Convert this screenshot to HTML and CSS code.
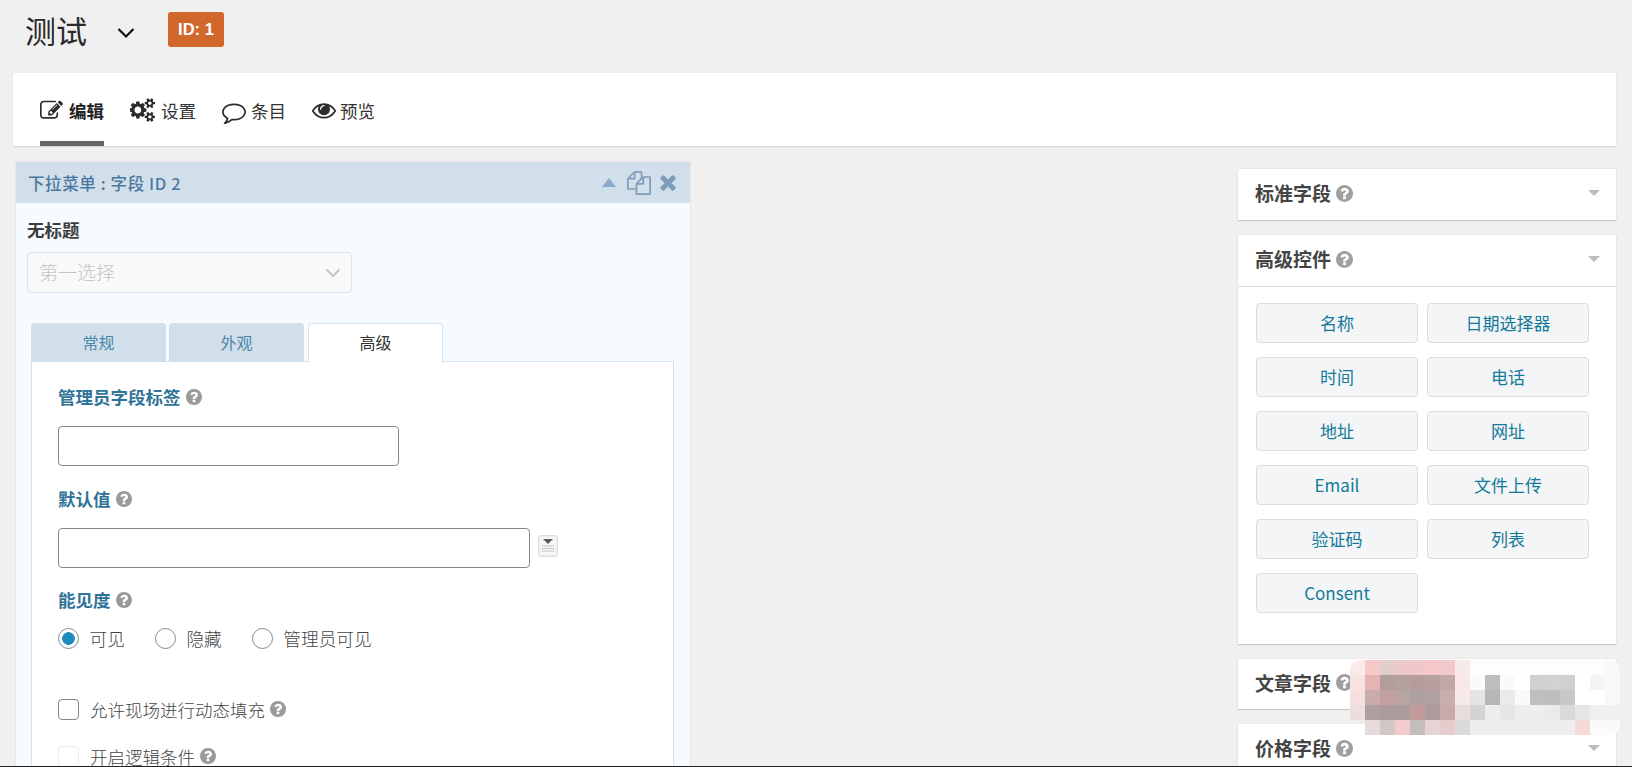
FILE: index.html
```html
<!DOCTYPE html>
<html lang="zh-CN">
<head>
<meta charset="utf-8">
<title>测试</title>
<link rel="stylesheet" href="styles.css">
</head>
<body>
<svg class="defs" width="0" height="0" aria-hidden="true">
  <symbol id="q" viewBox="128 128 1536 1536"><path d="M1024 1376v-192q0-14-9-23t-23-9h-192q-14 0-23 9t-9 23v192q0 14 9 23t23 9h192q14 0 23-9t9-23zm256-672q0-88-55.5-163t-138.5-116-170-41q-243 0-371 213-15 24 8 42l132 100q7 6 19 6 16 0 25-12 53-68 86-92 34-24 86-24 48 0 85.5 26t37.5 59q0 38-20 61t-68 45q-63 28-115.5 86.5t-52.5 125.5v36q0 14 9 23t23 9h192q14 0 23-9t9-23q0-19 21.5-49.5t54.5-49.5q32-18 49-28.5t46-35 44.5-48 28-60.5 12.5-81zm384 192q0 209-103 385.5t-279.5 279.5-385.5 103-385.5-103-279.5-279.5-103-385.5 103-385.5 279.5-279.5 385.5-103 385.5 103 279.5 279.5 103 385.5z"/></symbol>
</svg>

<header class="title-bar">
  <h1 class="form-title">测试</h1>
  <svg class="chevron" viewBox="0 0 18 12"><path d="M1.5 2 9 9.5 16.5 2" fill="none" stroke="#111" stroke-width="2.2"/></svg>
  <span class="id-badge">ID: 1</span>
</header>

<nav class="toolbar">
  <a class="tool active">
    <svg class="ti ti-edit" viewBox="0 0 1792 1792"><path d="M888 1184l116-116-152-152-116 116v56h96v96h56zm440-720q-16-16-33 1l-350 350q-17 17-1 33t33-1l350-350q17-17 1-33zm80 594v190q0 119-84.5 203.5t-203.5 84.5h-832q-119 0-203.5-84.5t-84.5-203.5v-832q0-119 84.5-203.5t203.5-84.5h832q63 0 117 25 15 7 18 23 3 17-9 29l-49 49q-14 14-32 8-23-6-45-6h-832q-66 0-113 47t-47 113v832q0 66 47 113t113 47h832q66 0 113-47t47-113v-126q0-13 9-22l64-64q15-15 35-7t20 29zm-96-738l288 288-672 672h-288v-288zm444 132l-92 92-288-288 92-92q28-28 68-28t68 28l152 152q28 28 28 68t-28 68z"/></svg>
    <span>编辑</span>
  </a>
  <a class="tool">
    <svg class="ti ti-cogs" viewBox="0 0 1920 1792"><path d="M832 896q0-106-75-181t-181-75-181 75-75 181 75 181 181 75 181-75 75-181zm768 512q0-52-38-90t-90-38-90 38-38 90q0 53 37.5 90.5t90.5 37.5 90.5-37.5 37.5-90.5zm0-1024q0-52-38-90t-90-38-90 38-38 90q0 53 37.5 90.5t90.5 37.5 90.5-37.5 37.5-90.5zm-384 421v185q0 10-7 19.5t-16 10.5l-155 24q-11 35-32 76 34 48 90 115 7 11 7 20 0 12-7 19-23 30-82.5 89.5t-78.5 59.5q-11 0-21-7l-115-90q-37 19-77 31-11 108-23 155-7 24-30 24h-186q-11 0-20-7.5t-10-17.5l-23-153q-34-10-75-31l-118 89q-7 7-20 7-11 0-21-8-144-133-144-160 0-9 7-19 10-14 41-53t47-61q-23-44-35-82l-152-24q-10-1-17-9.5t-7-19.5v-185q0-10 7-19.5t16-10.5l155-24q11-35 32-76-34-48-90-115-7-11-7-20 0-12 7-20 22-30 82-89t79-59q11 0 21 7l115 90q34-18 77-32 11-108 23-154 7-24 30-24h186q11 0 20 7.5t10 17.5l23 153q34 10 75 31l118-89q8-7 20-7 11 0 21 8 144 133 144 160 0 8-7 19-12 16-42 54t-45 60q23 48 34 82l152 23q10 2 17 10.5t7 19.5zm640 533v140q0 16-149 31-12 27-30 52 51 113 51 138 0 4-4 7-122 71-124 71-8 0-46-47t-52-68q-20 2-30 2t-30-2q-14 21-52 68t-46 47q-2 0-124-71-4-3-4-7 0-25 51-138-18-25-30-52-149-15-149-31v-140q0-16 149-31 13-29 30-52-51-113-51-138 0-4 4-7 4-2 35-20t59-34 30-16q8 0 46 46.5t52 67.5q20-2 30-2t30 2q51-71 92-112l6-2q4 0 124 70 4 3 4 7 0 25-51 138 17 23 30 52 149 15 149 31zm0-1024v140q0 16-149 31-12 27-30 52 51 113 51 138 0 4-4 7-122 71-124 71-8 0-46-47t-52-68q-20 2-30 2t-30-2q-14 21-52 68t-46 47q-2 0-124-71-4-3-4-7 0-25 51-138-18-25-30-52-149-15-149-31v-140q0-16 149-31 13-29 30-52-51-113-51-138 0-4 4-7 4-2 35-20t59-34 30-16q8 0 46 46.5t52 67.5q20-2 30-2t30 2q51-71 92-112l6-2q4 0 124 70 4 3 4 7 0 25-51 138 17 23 30 52 149 15 149 31z"/></svg>
    <span>设置</span>
  </a>
  <a class="tool">
    <svg class="ti ti-comment" viewBox="0 0 1792 1792"><path d="M896 384q-204 0-381.5 69.5t-282 187.5-104.5 255q0 112 71.5 213.5t201.5 175.5l87 50-27 96q-24 91-70 172 152-63 275-171l43-38 57 6q69 8 130 8 204 0 381.5-69.5t282-187.5 104.5-255-104.5-255-282-187.5-381.5-69.5zm896 512q0 174-120 321.5t-326 233-450 85.5q-70 0-145-8-198 175-460 242-49 14-114 22h-5q-15 0-27-10.5t-16-27.5v-1q-3-4-.5-12t2-10 4.5-9.5l6-9 7-8.5 8-9q7-8 31-34.5t34.5-38 31-39.5 32.5-51 27-59 26-76q-157-89-247.5-220t-90.5-281q0-174 120-321.5t326-233 450-85.5 450 85.5 326 233 120 321.5z"/></svg>
    <span>条目</span>
  </a>
  <a class="tool">
    <svg class="ti ti-eye" viewBox="0 0 1792 1792"><path d="M1664 960q-152-236-381-353 61 104 61 225 0 185-131.5 316.5t-316.5 131.5-316.5-131.5-131.5-316.5q0-121 61-225-229 117-381 353 133 205 333.5 326.5t434.5 121.5 434.5-121.5 333.5-326.5zm-720-384q0-20-14-34t-34-14q-125 0-214.5 89.5t-89.5 214.5q0 20 14 34t34 14 34-14 14-34q0-86 61-147t147-61q20 0 34-14t14-34zm848 384q0 34-20 69-140 230-376.5 368.5t-499.5 138.5-499.5-139-376.5-368q-20-35-20-69t20-69q140-229 376.5-368t499.5-139 499.5 139 376.5 368q20 35 20 69z"/></svg>
    <span>预览</span>
  </a>
</nav>

<main class="workspace">
  <section class="field">
    <div class="field-head">
      <span class="field-name">下拉菜单 : 字段 ID 2</span>
      <svg class="fh-up" viewBox="0 0 14 9"><path d="M7 0 14 9H0z"/></svg>
      <svg class="fh-copy" viewBox="0 0 1792 1792"><path d="M1696 384q40 0 68 28t28 68v1216q0 40-28 68t-68 28h-960q-40 0-68-28t-28-68v-288h-544q-40 0-68-28t-28-68v-672q0-40 20-88t48-76l408-408q28-28 76-48t88-20h416q40 0 68 28t28 68v328q68-40 128-40h416zm-544 213l-299 299h299v-299zm-640-384l-299 299h299v-299zm196 647l316-316v-416h-384v416q0 40-28 68t-68 28h-416v640h512v-256q0-40 20-88t48-76zm956 804v-1152h-384v416q0 40-28 68t-68 28h-416v640h896z"/></svg>
      <svg class="fh-close" viewBox="280 280 1220 1280"><path d="M1490 1322q0 40-28 68l-136 136q-28 28-68 28t-68-28l-294-294-294 294q-28 28-68 28t-68-28l-136-136q-28-28-28-68t28-68l294-294-294-294q-28-28-28-68t28-68l136-136q28-28 68-28t68 28l294 294 294-294q28-28 68-28t68 28l136 136q28 28 28 68t-28 68l-294 294 294 294q28 28 28 68z"/></svg>
    </div>
    <div class="field-body">
      <div class="preview-label">无标题</div>
      <div class="preview-select">
        <span>第一选择</span>
        <svg class="ps-arrow" viewBox="0 0 16 10"><path d="M1.5 1.5 8 8l6.5-6.5" fill="none" stroke="#c4c4c4" stroke-width="2"/></svg>
      </div>
      <div class="tabs">
        <span class="tab">常规</span>
        <span class="tab">外观</span>
        <span class="tab current">高级</span>
      </div>
      <div class="tab-panel">
        <label class="set-label">管理员字段标签<svg class="help"><use href="#q"/></svg></label>
        <div class="text-input short"></div>
        <label class="set-label second">默认值<svg class="help"><use href="#q"/></svg></label>
        <div class="input-row">
          <div class="text-input long"></div>
          <svg class="merge" viewBox="0 0 20 22">
            <rect x="0.5" y="0.5" width="19" height="21" rx="2" fill="#f0f0f0" stroke="#dcdcdc"/>
            <rect x="2.5" y="2.5" width="15" height="17" fill="#f7f7f7"/>
            <path d="M5 4h10l-5 5z" fill="#5a5a5a"/>
            <path d="M4 11h12M4 13.5h12M4 16h12" stroke="#c4c4c4"/>
          </svg>
        </div>
        <label class="set-label third">能见度<svg class="help"><use href="#q"/></svg></label>
        <div class="radios">
          <span class="choice"><i class="radio on"></i>可见</span>
          <span class="choice"><i class="radio"></i>隐藏</span>
          <span class="choice"><i class="radio"></i>管理员可见</span>
        </div>
        <div class="check-row first"><i class="check"></i>允许现场进行动态填充<svg class="help"><use href="#q"/></svg></div>
        <div class="check-row next"><i class="check faded"></i>开启逻辑条件<svg class="help"><use href="#q"/></svg></div>
      </div>
    </div>
  </section>

  <aside class="sidebar">
    <section class="widget">
      <h2 class="widget-head">标准字段<svg class="help big"><use href="#q"/></svg><i class="caret"></i></h2>
    </section>
    <section class="widget">
      <h2 class="widget-head ruled">高级控件<svg class="help big"><use href="#q"/></svg><i class="caret"></i></h2>
      <div class="btn-grid">
        <a class="fbtn">名称</a>
        <a class="fbtn">日期选择器</a>
        <a class="fbtn">时间</a>
        <a class="fbtn">电话</a>
        <a class="fbtn">地址</a>
        <a class="fbtn">网址</a>
        <a class="fbtn">Email</a>
        <a class="fbtn">文件上传</a>
        <a class="fbtn">验证码</a>
        <a class="fbtn">列表</a>
        <a class="fbtn">Consent</a>
      </div>
    </section>
    <section class="widget">
      <h2 class="widget-head slim">文章字段<svg class="help big"><use href="#q"/></svg><i class="caret"></i></h2>
    </section>
    <section class="widget">
      <h2 class="widget-head">价格字段<svg class="help big"><use href="#q"/></svg><i class="caret"></i></h2>
    </section>
  </aside>
</main>

<svg class="mosaic" viewBox="0 0 18 5" shape-rendering="crispEdges" aria-hidden="true">
  <g>
    <rect x="0" y="0" width="1" height="1" fill="#faeaea"/><rect x="1" y="0" width="1" height="1" fill="#f6c9c9"/><rect x="2" y="0" width="1" height="1" fill="#e2cdcd"/><rect x="3" y="0" width="1" height="1" fill="#ecc8c9"/><rect x="4" y="0" width="1" height="1" fill="#efc8c9"/><rect x="5" y="0" width="1" height="1" fill="#f5c7c8"/><rect x="6" y="0" width="1" height="1" fill="#f3c8ca"/><rect x="7" y="0" width="1" height="1" fill="#f9eaea"/><rect x="8" y="0" width="9" height="1" fill="#fdfdfd"/><rect x="17" y="0" width="1" height="1" fill="#f9f9f9"/>
    <rect x="0" y="1" width="1" height="1" fill="#f8e3e3"/><rect x="1" y="1" width="1" height="1" fill="#e5b3b3"/><rect x="2" y="1" width="1" height="1" fill="#b29d9d"/><rect x="3" y="1" width="1" height="1" fill="#b5a0a0"/><rect x="4" y="1" width="1" height="1" fill="#b59b9b"/><rect x="5" y="1" width="1" height="1" fill="#b8a0a0"/><rect x="6" y="1" width="1" height="1" fill="#c2a9a9"/><rect x="7" y="1" width="1" height="1" fill="#f8e8e8"/><rect x="8" y="1" width="1" height="1" fill="#fafafa"/><rect x="9" y="1" width="1" height="1" fill="#bdbdbd"/><rect x="10" y="1" width="1" height="1" fill="#fafafa"/><rect x="11" y="1" width="1" height="1" fill="#fff"/><rect x="12" y="1" width="1" height="1" fill="#d0d0d0"/><rect x="13" y="1" width="1" height="1" fill="#d2d2d2"/><rect x="14" y="1" width="1" height="1" fill="#d0d0d0"/><rect x="15" y="1" width="1" height="1" fill="#fff"/><rect x="16" y="1" width="1" height="1" fill="#f4f4f4"/><rect x="17" y="1" width="1" height="1" fill="#f8f8f8"/>
    <rect x="0" y="2" width="1" height="1" fill="#f4e0e0"/><rect x="1" y="2" width="1" height="1" fill="#c9adad"/><rect x="2" y="2" width="1" height="1" fill="#c49f9f"/><rect x="3" y="2" width="1" height="1" fill="#b9a4a4"/><rect x="4" y="2" width="1" height="1" fill="#aea0a0"/><rect x="5" y="2" width="1" height="1" fill="#b1a0a0"/><rect x="6" y="2" width="1" height="1" fill="#c9b0b0"/><rect x="7" y="2" width="1" height="1" fill="#f8eaea"/><rect x="8" y="2" width="1" height="1" fill="#e4e4e4"/><rect x="9" y="2" width="1" height="1" fill="#b6b6b6"/><rect x="10" y="2" width="1" height="1" fill="#eaeaea"/><rect x="11" y="2" width="1" height="1" fill="#fafafa"/><rect x="12" y="2" width="1" height="1" fill="#bfbfbf"/><rect x="13" y="2" width="1" height="1" fill="#bdbdbd"/><rect x="14" y="2" width="1" height="1" fill="#c8c8c8"/><rect x="15" y="2" width="2" height="1" fill="#fff"/><rect x="17" y="2" width="1" height="1" fill="#f8f8f8"/>
    <rect x="0" y="3" width="1" height="1" fill="#eadede"/><rect x="1" y="3" width="1" height="1" fill="#aea0a0"/><rect x="2" y="3" width="1" height="1" fill="#ab9b9b"/><rect x="3" y="3" width="1" height="1" fill="#ad9c9c"/><rect x="4" y="3" width="1" height="1" fill="#c29b9b"/><rect x="5" y="3" width="1" height="1" fill="#ad9a9a"/><rect x="6" y="3" width="1" height="1" fill="#c9a9a9"/><rect x="7" y="3" width="1" height="1" fill="#e8dcdc"/><rect x="8" y="3" width="1" height="1" fill="#d4d4d4"/><rect x="9" y="3" width="1" height="1" fill="#ededed"/><rect x="10" y="3" width="1" height="1" fill="#e6e6e6"/><rect x="11" y="3" width="1" height="1" fill="#ededed"/><rect x="12" y="3" width="1" height="1" fill="#eee"/><rect x="13" y="3" width="1" height="1" fill="#eaeaea"/><rect x="14" y="3" width="1" height="1" fill="#d6dada"/><rect x="15" y="3" width="1" height="1" fill="#e6e6e6"/><rect x="16" y="3" width="1" height="1" fill="#efefef"/><rect x="17" y="3" width="1" height="1" fill="#f0f0f0"/>
    <rect x="1" y="4" width="1" height="1" fill="#e6dada"/><rect x="2" y="4" width="1" height="1" fill="#d2c6c6"/><rect x="3" y="4" width="1" height="1" fill="#f2cccc"/><rect x="4" y="4" width="1" height="1" fill="#c4bfbc"/><rect x="5" y="4" width="1" height="1" fill="#e7d3d3"/><rect x="6" y="4" width="1" height="1" fill="#e7cccd"/><rect x="7" y="4" width="1" height="1" fill="#dadada"/><rect x="8" y="4" width="7" height="1" fill="#eeeeee"/><rect x="15" y="4" width="1" height="1" fill="#f6d8d8"/><rect x="16" y="4" width="2" height="1" fill="#fafafa"/>
  </g>
</svg>
<div class="bottom-line"></div>
</body>
</html>
```

FILE: styles.css
```css
* { box-sizing: border-box; }
html, body { margin: 0; height: 767px; overflow: hidden; }
body {
  position: relative;
  background: #f0f0f0;
  color: #444;
  font-family: "Noto Sans CJK SC", "Liberation Sans", sans-serif;
  font-size: 17.5px;
  font-weight: 400;
}
.defs { position: absolute; }
svg { display: block; flex: none; }

.title-bar { height: 73px; display: flex; align-items: center; padding: 0 0 14px 25px; }
.form-title { margin: 0; font-size: 31px; font-weight: 400; color: #2a2a2a; line-height: 40px; }
.chevron { width: 18px; height: 12px; margin: 7px 0 0 30px; }
.id-badge {
  margin-left: 33px; width: 56px; height: 35px; border-radius: 3px;
  background: #d2672c; color: #fff; font: 700 16.5px/35px "Liberation Sans", sans-serif;
  text-align: center;
}

.toolbar {
  margin-left: 13px; width: 1603px; height: 73px; background: #fff;
  box-shadow: 0 1px 1px rgba(0,0,0,.1), 0 0 1px rgba(0,0,0,.08);
  display: flex; padding-left: 27px;
}
.tool {
  height: 73px; display: flex; align-items: center; padding-top: 6px;
  color: #333; font-size: 17.5px; margin-right: 26px; border-bottom: 5px solid transparent;
}
.tool.active { font-weight: 700; border-bottom-color: #666; color: #222; }
.ti { fill: #2b2b2b; margin-right: 5px; }
.ti-edit { width: 23px; height: 23px; margin-right: 6px; }
.ti-cogs { width: 26px; height: 24px; }
.ti-comment { width: 24px; height: 24px; margin-top: 4px; }
.ti-eye { width: 24px; height: 24px; margin-right: 4px; }

.workspace { display: flex; align-items: flex-start; padding-left: 16px; }

.field { width: 674px; margin-top: 16px; height: 605px; background: #f6fbff; box-shadow: 0 0 1px rgba(120,150,180,.5); }
.field-head {
  height: 41px; background: #d1dfea; display: flex; align-items: center; padding: 0 14px 0 12px;
}
.field-name { flex: 1; color: #4b78a0; font-size: 16.5px; font-weight: 500; letter-spacing: .6px; }
.fh-up { width: 14px; height: 9px; fill: #8aaac6; margin-right: 11px; }
.fh-copy { width: 24px; height: 24px; fill: #7f9db8; margin-right: 9px; }
.fh-close { width: 16px; height: 17px; fill: #7f9db8; }

.field-body { padding: 0 0 0 11px; }
.preview-label { margin-top: 16px; height: 22px; font-weight: 700; font-size: 17.5px; line-height: 22px; color: #3d3d3d; }
.preview-select {
  margin-top: 11px; width: 325px; height: 41px; border: 1px solid #dfe3e6; border-radius: 4px;
  background: #f8f9f9; color: #c4c4c4; font-size: 19px; font-weight: 300;
  display: flex; align-items: center; justify-content: space-between; padding: 0 10px 2px 11px;
}
.ps-arrow { width: 16px; height: 10px; margin-top: 2px; }

.tabs { margin-top: 30px; margin-left: 4px; height: 39px; display: flex; gap: 3px; }
.tab {
  width: 135px; height: 39px; background: #d1dfea; border-radius: 4px 4px 0 0;
  color: #4a86a8; font-size: 16px; line-height: 39px; text-align: center;
}
.tab.current {
  margin-left: 1px; height: 40px; background: #fff; color: #333;
  border: 1px solid #d7e2ec; border-bottom: 0; line-height: 37px; position: relative; z-index: 1;
}

.tab-panel {
  margin-left: 4px; width: 643px; height: 406px; background: #fff;
  border: 1px solid #d7e2ec; padding: 0 0 0 26px; margin-top: -1px;
}
.set-label {
  display: flex; align-items: center; height: 22px; color: #2f7398; font-weight: 700; font-size: 17.5px; line-height: 22px;
  margin-top: 25px; padding-bottom: 2px;
}
.set-label.second { margin-top: 23px; }
.set-label.third { margin-top: 22px; }
.help { width: 16px; height: 16px; fill: #9a9a9a; margin-left: 5px; }
.help.big { width: 17px; height: 17px; fill: #a0a0a0; margin-left: 5px; }

.text-input { height: 40px; background: #fff; border: 1px solid #7e8993; border-radius: 4px; }
.text-input.short { width: 341px; margin-top: 17px; }
.input-row { display: flex; margin-top: 17px; align-items: flex-start; }
.text-input.long { width: 472px; }
.merge { width: 20px; height: 22px; margin: 7px 0 0 8px; }

.radios { display: flex; margin-top: 15px; }
.choice { display: flex; align-items: center; height: 22px; margin-right: 30px; color: #444; font-weight: 300; font-size: 17.7px; }
.radio {
  width: 21px; height: 21px; border-radius: 50%; border: 1px solid #7e8993; margin-right: 10.5px;
  background: #fff; display: block;
}
.radio.on { background: radial-gradient(circle, #1e8cbe 0 6px, #fff 6.6px); }

.check-row { display: flex; align-items: center; height: 22px; color: #444; font-weight: 300; }
.check-row.first { margin-top: 49px; }
.check-row.next { margin-top: 25px; }
.check { width: 21px; height: 21px; border: 1px solid #7e8993; border-radius: 4px; margin-right: 11px; display: block; background: #fff; }
.check.faded { border-color: #ececec; }

.sidebar { margin-left: 548px; width: 378px; margin-top: 23px; }
.widget {
  background: #fff; margin-bottom: 15px;
  box-shadow: 0 1px 1px rgba(0,0,0,.14), 0 0 1px rgba(0,0,0,.14);
}
.widget-head {
  margin: 0; height: 51px; display: flex; align-items: center; padding: 0 16px 3px 17px;
  font-size: 19px; font-weight: 700; color: #444; line-height: 24px;
}
.widget-head.ruled { border-bottom: 1px solid #dedede; height: 52px; }
.widget-head.slim { height: 50px; }
.caret { margin-left: auto; width: 0; height: 0; border: 6px solid transparent; border-top: 6px solid #bdbdbd; border-bottom-width: 0; }
.btn-grid {
  display: grid; grid-template-columns: 162px 162px; gap: 14px 9px; padding: 16px 0 31px 18px;
}
.fbtn {
  height: 40px; background: #f3f5f6; border: 1px solid #dcdcde; border-radius: 4px;
  color: #137a9a; font-size: 17px; line-height: 37px; text-align: center; font-weight: 400;
}

.mosaic { position: absolute; left: 1350px; top: 660px; width: 270px; height: 75px; border-radius: 10px; overflow: hidden; }
.bottom-line { position: absolute; left: 0; right: 0; bottom: 0; height: 1px; background: #222; }
```
